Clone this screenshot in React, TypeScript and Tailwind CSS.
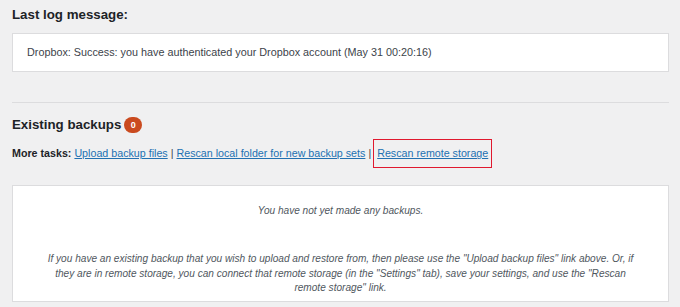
export default function App() {
  return (
    <div className="w-[680px] h-[307px] overflow-hidden bg-[#f0f0f1] text-[#3c434a] px-[12px]" style={{ fontFamily: '"Liberation Sans", Arial, sans-serif' }}>
      <h2 className="pt-[5px] text-[13.3px] font-bold text-[#1d2327] leading-[20px]">Last log message:</h2>
      <div className="mt-[8px] h-[39px] w-[657px] bg-white border border-[#dcdcde] flex items-center px-[14px] text-[10.8px]">
        Dropbox: Success: you have authenticated your Dropbox account (May 31 00:20:16)
      </div>
      <div className="mt-[30px] w-[657px] h-px bg-[#dcdcde]"></div>
      <div className="mt-[12px] h-[20px] flex items-center gap-[3px]">
        <h2 className="text-[13.3px] font-bold text-[#1d2327] leading-[20px]">Existing backups</h2>
        <span className="h-[16px] w-[18px] rounded-full bg-[#ca4a1f] text-white text-[9px] font-bold flex items-center justify-center leading-none">0</span>
      </div>
      <div className="mt-[4px] flex items-center text-[10.7px] h-[29px]">
        <span className="font-semibold text-[#1d2327]">More tasks:</span>
        <a className="ml-[3px] text-[#2271b1] underline">Upload backup files</a>
        <span className="mx-[3px]">|</span>
        <a className="text-[#2271b1] underline">Rescan local folder for new backup sets</a>
        <span className="ml-[3px]">|</span>
        <div className="ml-[2px] h-[29px] border border-[#e0192f] flex items-center px-[3px]">
          <a className="text-[#2271b1] underline">Rescan remote storage</a>
        </div>
      </div>
      <div className="mt-[17px] w-[657px] h-[117px] bg-white border border-[#dcdcde] text-[10.1px] italic text-center text-[#50575e] px-[30px]">
        <p className="mt-[18px] leading-[14px]">You have not yet made any backups.</p>
        <p className="mt-[34px] leading-[14.5px]">If you have an existing backup that you wish to upload and restore from, then please use the "Upload backup files" link above. Or, if they are in remote storage, you can connect that remote storage (in the "Settings" tab), save your settings, and use the "Rescan remote storage" link.</p>
      </div>
    </div>
  );
}
